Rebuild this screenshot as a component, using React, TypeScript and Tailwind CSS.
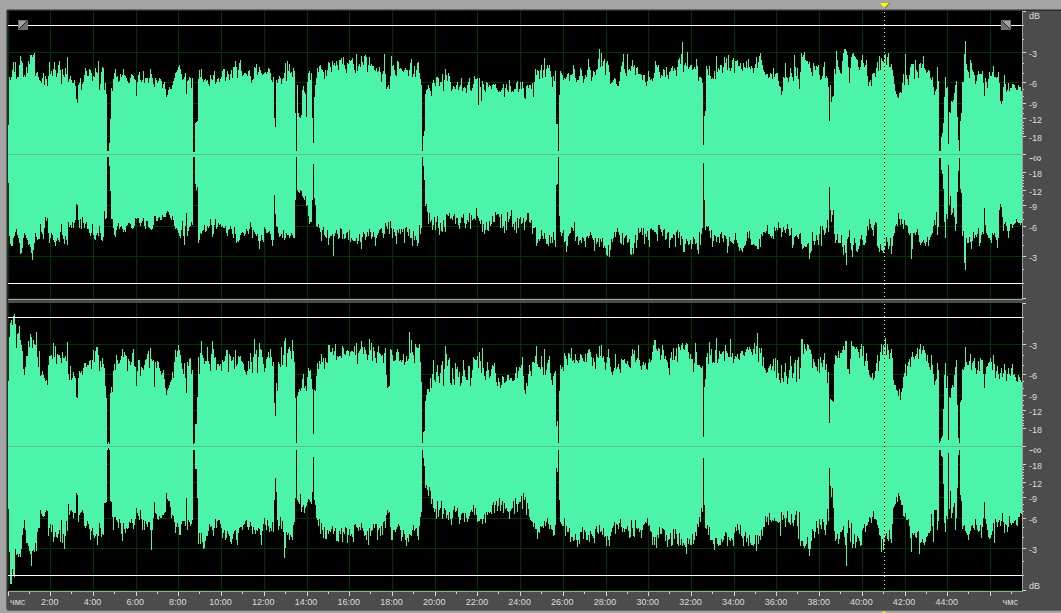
import React from "react";

// Envelopes are flat lists of x, y pairs in chart units.
const leftUpperText =
  "8 125 9 77 11 77 13 62 14 72 15 62 16 79 18 77 20 56 22 63 23 77 25 77 26 67 27 73 28 61 29 64 30 55 32 57 34 53 35 76 37 72 39 80 41 83 43 73 44 85 45 76 47 86 49 62 50 74 51 71 52 76 54 62 56 77 58 65 59 61 61 84 62 69 64 77 65 68 66 74 67 57 68 82 70 76 72 83 74 80 75 86 76 99 77 103 78 85 80 78 81 90 83 82 85 68 87 76 90 70 92 81 94 77 95 68 97 73 98 61 99 90 101 72 103 68 104 90 105 83 106 94 107 151 108 151 109 143 110 119 111 88 112 91 113 79 114 73 115 69 116 77 119 81 120 74 122 75 123 69 125 76 127 81 129 83 131 74 133 76 135 80 136 96 137 82 139 72 140 80 142 80 143 71 144 83 146 78 148 83 150 69 151 74 153 84 154 87 155 78 157 83 160 79 162 88 164 82 166 97 168 90 170 89 172 85 174 78 175 73 177 70 178 67 180 69 182 80 185 73 186 94 187 81 190 78 191 88 192 78 193 152 194 152 195 123 196 122 197 121 198 79 199 70 200 77 201 69 202 79 204 80 207 80 209 86 210 75 212 80 214 71 215 84 217 79 219 82 221 77 222 71 224 69 225 81 227 71 229 80 231 70 232 78 233 67 235 61 237 78 238 70 240 60 242 76 245 73 247 76 249 70 251 83 253 79 254 67 256 64 257 75 259 67 261 73 262 75 264 73 267 72 268 68 270 73 272 82 273 77 274 118 275 127 276 80 277 83 279 76 281 84 283 78 285 63 286 81 287 61 288 71 289 64 290 73 292 77 293 68 294 71 295 113 296 151 297 85 298 113 299 117 301 115 302 90 303 86 304 92 305 94 306 117 307 82 308 73 309 71 310 80 311 73 312 118 313 143 314 97 315 85 316 78 317 68 318 72 319 66 320 65 322 70 324 79 325 70 326 76 328 62 330 67 331 72 332 61 335 66 336 61 338 70 339 60 341 58 342 64 343 57 345 69 346 73 347 63 349 60 350 61 352 58 353 64 355 73 356 54 357 71 359 64 360 67 361 56 363 65 364 56 366 57 367 72 369 57 370 66 372 66 374 70 376 68 378 71 379 67 381 82 383 71 384 54 385 74 386 89 388 85 389 89 390 76 391 56 392 66 394 70 396 76 397 61 399 69 401 69 403 72 405 68 407 70 408 76 409 70 411 59 412 77 414 66 415 77 416 70 418 62 419 73 420 79 421 85 422 151 423 136 424 131 425 94 427 89 428 85 430 91 431 96 432 83 433 80 435 86 436 77 438 78 439 86 441 82 442 74 443 91 444 80 445 69 447 81 448 73 450 82 451 91 453 86 455 89 457 82 458 90 459 87 461 78 462 91 464 87 466 93 468 82 469 78 470 90 472 88 474 76 476 79 477 78 478 105 479 78 480 87 481 101 482 81 483 84 485 92 486 82 488 87 491 89 493 84 495 84 497 90 500 92 503 84 504 97 506 84 508 92 509 80 511 92 513 92 515 89 517 81 518 92 520 82 521 89 522 82 524 98 525 99 526 86 528 88 530 85 531 89 532 83 533 97 534 82 535 69 536 75 538 71 539 79 541 65 542 78 544 58 545 77 547 65 548 68 549 65 551 77 552 87 553 76 554 81 555 71 556 124 557 124 558 151 559 95 560 71 561 73 563 80 564 78 567 74 568 73 569 81 570 75 572 74 573 65 574 69 575 78 577 80 579 76 580 68 582 76 583 83 585 75 586 77 588 59 590 70 591 81 593 71 595 75 597 69 599 49 600 67 601 53 602 66 604 59 605 75 606 63 607 61 609 72 610 84 612 82 614 78 617 86 619 81 621 66 623 54 624 69 626 76 627 54 628 70 630 71 632 60 633 67 634 65 635 75 637 67 638 74 640 74 642 80 644 75 646 86 647 81 648 71 650 80 653 78 654 73 655 61 657 67 658 65 660 78 662 76 663 69 665 77 666 67 668 79 670 71 672 66 673 71 675 70 676 76 677 67 679 58 680 64 681 54 682 42 683 72 685 63 686 66 687 52 688 69 690 65 692 70 693 69 695 69 696 59 697 66 698 81 700 77 702 83 703 145 704 116 705 111 706 66 708 75 709 66 710 76 713 79 714 71 715 79 716 56 717 72 719 70 721 65 722 73 724 57 725 63 726 58 727 70 728 55 729 68 731 68 733 58 734 73 735 61 737 60 739 66 740 63 742 71 743 63 745 68 746 61 747 68 748 59 750 69 751 66 753 73 755 64 756 57 757 68 759 56 760 53 761 60 763 70 765 75 767 74 768 78 770 73 772 79 773 68 774 77 775 74 777 73 779 86 780 87 781 95 782 91 783 77 784 78 785 63 786 77 788 82 789 77 790 68 792 77 793 81 794 55 795 67 796 76 797 68 799 89 800 72 801 53 803 55 804 52 805 60 807 61 809 62 811 72 812 76 813 63 815 70 817 67 818 65 820 80 822 76 824 62 825 78 827 78 828 87 829 121 830 85 831 102 833 96 834 69 835 74 836 51 837 60 839 70 841 74 843 53 845 49 847 55 849 83 851 57 852 54 854 56 857 60 859 70 861 60 862 55 864 67 866 60 867 76 868 86 870 80 871 86 872 74 874 73 875 77 877 62 878 71 879 56 880 70 881 58 883 62 884 54 885 54 886 65 888 53 889 67 891 64 893 76 894 84 896 94 898 98 899 93 901 93 903 74 904 85 905 54 906 75 908 85 909 75 911 64 913 64 914 79 915 60 916 70 918 78 919 64 921 68 923 56 924 68 926 73 928 70 930 78 932 77 933 87 934 95 936 89 937 67 938 81 939 151 940 151 941 137 942 133 943 123 944 97 945 77 946 88 947 87 948 144 949 112 950 113 951 101 953 100 954 93 955 85 956 81 957 117 958 140 959 151 960 121 961 113 962 82 963 82 964 54 965 41 966 64 967 70 969 78 970 60 972 70 974 75 975 84 977 75 978 71 980 74 982 71 984 96 985 78 987 88 989 72 991 76 993 66 994 77 996 78 998 72 999 83 1000 101 1002 101 1003 87 1004 75 1006 92 1008 83 1009 91 1011 88 1013 84 1015 88 1017 90 1018 85 1020 87 1022 90";

const leftLowerStart =
  "8 183 9 236 10 244 12 246 14 236 16 229 17 235 19 243 20 254 22 248 24 233 26 238 28 245 30 247 32 260 33 250 34 243 35 233 37 240 39 239 40 224 41 232 43 239 45 217 46 221 47 218 48 233 49 243 51 233 53 240 55 246 57 238 59 242 61 224 62 235 64 244 65 236 67 245 68 222 69 227 71 228 72 222 73 228 75 220 76 204 77 205 78 220 79 228 80 219 81 229 82 217 84 228 86 222 87 229 89 233 91 233 92 224 93 235 94 239 96 235 98 236 99 226 101 240 103 237 104 211 105 219 106 218 107 157 108 157 109 166 110 191 111 219 112 219 113 228 115 237 117 226 118 223 119 229 121 226 123 232 125 232 127 225 129 223 131 228 133 228 135 218 137 218 139 223 141 223 143 218 145 229 146 221 148 227 150 229 152 229 154 216 156 221 158 218 160 220 162 215 164 217 166 213 167 211 169 215 171 220 172 216 174 226 176 228 178 233 180 238 182 221 184 245 186 213 187 236 189 227 191 222 192 225 193 157 194 157 195 184 196 190 197 187 198 243 199 240 200 233 202 231 204 225 205 232 207 226 209 226 210 219 212 237 214 225 215 219 216 229 218 223 220 224 222 226 224 228 225 226 227 236 229 229 231 229 233 238 234 227 236 243 238 242 240 235 242 232 244 236 246 229 248 234 250 222 252 238 253 230 255 234 257 234 259 249 261 235 263 242 264 227 266 233 268 232";

const leftLowerMiddle =
  "270 234 273 240 274 195 276 226 280 236 284 240 290 236 294 238 295 200 296 157 297 190 298 192 302 196 306 206 309 224 311 222 312 200 313 164 314 198 316 226 320 232 326 238 330 236 332 234 333 256 334 236 345 238 352 240 360 242 368 236 376 238 384 234 388 222 392 238 400 234 408 236 416 240 421 228 422 157 423 166 424 180 425 206 430 222 436 222 442 232 448 216 455 224 462 218 468 222 475 220 476 208 477 216 482 232 490 226 497 214 503 226 510 216 518 228 526 220 534 228 537 243 542 236 548 246 553 232 555 247 556 185 557 184 558 157 559 216 560 232 567 246 572 228 580 240 588 238 596 244 604 246 610 250 616 232 624 238 632 248 640 232 648 240 655 232 662 236 670 240 678 238 684 252 690 240 697 250 702 228 703 163 704 200 705 230 710 238 716 242 722 238 728 246 734 240 742 252 748 238 754 245 758 249 764 232 772 236 779 228";

const leftLowerEnd =
  "780 228 781 237 783 227 785 233 787 224 789 236 791 228 792 248 794 237 796 235 798 239 800 233 802 249 804 246 806 247 808 243 809 259 811 251 812 232 814 245 816 235 818 245 820 226 821 246 822 226 824 235 826 228 827 220 828 232 829 187 830 210 831 222 833 210 834 234 835 243 837 234 838 243 840 243 841 235 843 255 844 245 846 265 847 239 849 230 850 243 852 257 854 238 856 251 858 249 860 239 861 235 863 245 865 243 867 226 868 230 869 219 871 228 873 236 874 225 876 223 877 246 879 252 880 244 882 251 883 253 885 246 886 237 888 249 890 238 891 254 893 236 895 226 897 226 898 213 900 225 901 219 903 229 904 220 906 225 908 233 910 233 911 259 913 233 915 235 917 229 919 242 921 243 923 240 925 246 927 237 928 246 930 237 932 233 934 220 935 225 936 212 937 235 938 227 939 158 940 158 941 170 942 174 943 189 944 222 945 238 946 214 947 219 948 165 949 205 950 196 951 215 953 208 954 217 955 231 956 224 957 192 958 171 959 158 960 189 961 193 962 236 963 231 964 263 965 270 966 238 967 243 969 237 971 249 973 232 974 238 976 237 978 228 979 246 981 235 983 234 984 208 985 225 987 235 989 238 991 243 992 233 994 233 995 237 997 248 998 238 999 210 1000 204 1001 207 1002 217 1003 231 1005 222 1007 231 1008 238 1010 224 1012 228 1014 224 1016 219 1018 223 1020 225 1022 220";

const rightUpperText =
  "8 381 9 337 10 323 11 320 12 325 13 316 14 314 15 324 16 348 17 334 18 333 19 326 20 340 22 351 23 369 24 375 25 367 26 356 27 356 28 341 29 347 30 334 31 337 32 348 33 340 35 345 36 332 37 357 38 367 39 351 40 376 42 371 44 378 45 381 46 380 47 385 48 365 49 356 51 355 52 359 53 343 54 357 55 346 56 364 57 354 59 355 61 363 62 352 63 358 65 356 66 361 67 342 68 374 69 380 70 366 71 380 73 372 75 378 76 397 77 398 78 378 79 371 81 371 82 375 83 368 84 363 86 367 88 365 90 360 91 369 93 350 94 362 95 351 97 347 98 355 99 371 100 361 101 367 102 358 104 368 105 386 106 398 107 444 109 444 110 393 111 387 112 392 113 371 114 364 115 370 116 355 118 364 120 360 122 349 123 357 124 352 126 356 127 371 128 359 130 365 131 362 133 349 134 366 135 367 136 386 137 371 138 360 139 360 140 376 141 367 143 370 145 360 147 354 148 351 149 368 150 348 151 359 153 360 154 387 155 362 156 368 157 361 159 368 161 375 163 370 165 388 166 395 168 388 170 382 172 372 173 378 175 350 176 357 178 345 180 355 182 369 183 374 184 363 186 393 187 362 188 366 190 358 191 374 192 370 193 444 194 443 195 424 196 424 197 397 198 357 199 374 200 353 201 341 202 355 204 364 206 361 207 347 208 361 210 371 212 341 213 349 214 358 215 357 216 370 218 364 220 364 221 371 222 360 224 361 226 350 227 350 228 372 229 354 231 361 233 357 234 369 235 350 236 366 238 356 240 356 242 362 244 370 246 375 248 361 249 369 250 353 252 373 254 339 255 354 256 350 257 373 258 357 259 343 261 350 262 357 264 372 265 368 266 359 268 352 269 358 270 349 272 366 273 362 274 403 275 416 276 383 277 391 278 362 280 367 281 347 282 365 284 341 285 338 286 367 287 353 289 347 291 359 292 340 294 362 295 398 296 443 297 396 298 392 300 391 301 388 303 374 304 388 305 386 306 391 307 377 308 368 310 370 311 379 312 389 313 434 314 390 315 391 316 376 317 363 318 369 319 361 320 364 321 354 322 362 323 358 324 369 325 358 327 363 328 345 329 345 330 352 332 348 333 355 335 344 336 360 338 357 340 356 341 358 342 346 343 348 345 355 347 350 349 356 351 351 353 352 354 346 355 355 356 343 357 364 358 353 360 349 361 341 363 354 364 347 366 354 367 360 368 355 369 339 370 350 371 343 372 361 373 347 375 358 376 363 378 346 379 353 380 354 382 355 383 363 385 348 386 375 387 388 388 387 389 386 390 349 392 355 393 361 395 360 397 349 399 361 401 362 403 354 404 365 406 356 407 361 408 359 409 332 410 353 411 340 412 352 414 363 415 344 417 348 419 344 420 362 421 382 422 443 423 432 424 431 425 401 427 389 429 392 430 378 431 388 433 360 434 380 435 382 437 365 439 383 440 373 442 361 443 386 444 369 445 346 446 354 447 366 449 358 450 383 451 385 452 368 454 385 455 363 456 369 457 367 458 377 459 372 460 386 462 376 463 360 465 377 467 380 468 366 469 366 470 386 472 370 473 357 475 360 477 356 478 368 479 352 480 361 481 373 482 348 483 368 485 380 487 362 489 378 491 369 493 366 494 363 495 373 497 386 498 378 500 388 502 376 504 383 507 375 509 380 512 381 514 380 516 367 517 378 518 371 520 368 522 357 523 376 524 390 525 394 526 383 527 386 529 365 530 371 531 376 532 362 534 363 536 346 537 364 539 367 540 369 541 356 543 375 544 349 545 375 547 363 549 356 550 373 552 385 554 373 555 371 556 426 557 421 558 443 559 391 560 365 562 367 563 371 564 353 565 356 567 365 568 353 570 358 571 348 572 361 574 363 575 354 577 361 578 363 580 354 582 358 584 362 585 354 586 362 588 350 590 352 592 366 593 358 595 369 596 354 598 358 599 346 600 356 601 345 602 358 603 356 605 370 606 363 608 349 610 367 612 375 614 368 615 354 616 369 618 364 620 373 621 359 623 360 625 363 627 361 630 368 632 349 633 354 634 350 635 362 637 358 638 345 639 360 641 370 643 362 645 363 647 370 649 359 651 360 652 352 653 345 655 340 656 349 659 349 660 360 662 345 664 359 665 356 667 362 669 375 670 358 671 352 672 360 673 348 674 360 676 348 677 362 678 344 680 350 682 343 683 349 685 345 687 344 689 359 690 354 692 359 693 372 694 363 695 343 696 352 697 365 700 367 702 366 703 437 704 387 705 379 706 357 707 353 708 364 709 342 710 355 711 349 712 363 714 363 716 338 717 363 719 351 721 354 723 351 724 361 725 345 727 353 729 357 730 339 731 357 732 353 733 363 735 356 737 354 739 360 741 351 743 355 745 352 747 347 748 350 749 347 751 352 752 355 753 349 754 343 755 354 756 346 757 333 758 362 759 348 760 353 761 348 762 366 763 357 764 368 766 373 768 368 770 364 771 370 773 359 774 371 775 358 776 378 777 360 779 380 780 383 781 365 782 378 783 382 785 363 787 384 789 370 790 356 792 378 794 363 795 360 796 382 797 360 798 357 799 379 800 368 801 339 802 339 803 354 804 344 805 349 806 351 807 344 809 349 811 354 812 368 813 359 815 366 817 371 818 359 819 373 820 357 822 367 824 353 825 370 826 364 827 383 828 372 829 423 830 399 832 401 833 402 834 364 835 355 837 358 838 351 839 358 841 353 843 346 844 350 845 341 846 341 847 369 849 374 850 359 851 341 853 346 855 349 857 349 859 358 861 344 862 356 863 346 864 366 866 353 868 370 870 377 871 378 872 373 873 380 875 371 877 355 878 371 879 361 881 344 882 355 883 345 884 347 885 338 886 355 887 344 888 350 889 359 891 349 892 358 893 380 894 385 896 390 898 396 899 389 900 400 902 388 903 377 905 364 906 376 907 366 909 359 910 367 912 352 914 359 916 354 917 348 918 359 920 344 921 354 923 346 924 350 926 361 927 355 928 363 930 370 931 355 932 365 934 385 935 381 936 379 937 363 938 370 939 443 941 438 942 436 943 409 944 375 945 363 946 388 947 376 948 440 949 397 950 398 951 388 953 387 954 375 956 360 957 405 958 438 959 443 960 402 961 400 962 369 964 367 965 347 966 362 968 365 969 361 970 354 971 370 973 361 974 358 976 374 977 370 978 361 979 371 980 358 982 360 983 374 984 388 985 374 987 366 989 362 990 358 992 370 993 355 995 378 997 366 999 379 1001 368 1002 377 1004 364 1006 381 1008 368 1010 376 1012 364 1013 375 1015 377 1017 382 1018 375 1020 380 1022 379";

const rightLowerStart =
  "8 509 9 552 10 584 11 584 12 569 13 576 14 577 15 549 16 555 18 557 20 557 21 549 22 535 23 528 24 520 25 530 26 543 28 546 30 554 31 566 32 551 34 552 35 543 36 551 37 532 39 528 40 510 42 516 43 517 45 512 47 511 48 536 50 524 51 532 52 525 53 542 55 532 57 538 59 530 60 542 61 520 62 543 63 534 64 549 66 521 67 531 68 504 69 515 71 510 73 518 75 513 76 493 77 495 78 522 80 513 82 510 83 513 84 526 86 526 87 521 89 529 90 540 92 528 94 538 96 534 97 545 99 523 101 537 103 535 104 503 106 502 107 450 109 450 110 501 111 502 113 530 114 517 116 520 118 528 119 519 120 523 122 541 123 523 125 533 127 529 129 522 131 519 133 529 135 519 136 508 137 513 139 520 140 510 142 530 143 520 144 530 145 521 147 527 149 522 150 530 151 550 152 530 153 518 154 502 155 513 157 519 159 516 161 518 163 515 165 512 166 493 168 501 170 507 171 518 173 516 175 533 177 523 179 535 180 535 181 524 183 521 185 526 186 498 187 530 188 520 190 526 192 520 193 450 194 450 195 469 196 469 197 498 198 544 199 533 200 544 201 533 203 549 204 548 205 541 207 536 209 524 211 526 213 536 215 519 216 528 218 520 220 524 221 528 222 538 224 530 225 540 227 531 229 536 231 544 233 534 235 530 237 545 238 533 240 527 242 530 244 524 246 520 248 530 250 522 252 534 253 527 255 534 257 531 259 529 261 545 262 531 264 518 266 530 267 520 269 532";

const rightLowerMiddle =
  "270 528 273 532 274 500 275 478 276 492 277 520 283 532 284 558 286 532 292 540 294 522 295 498 296 450 297 500 298 502 306 506 311 504 312 492 313 457 314 500 316 518 322 530 330 532 340 534 350 536 360 530 366 540 374 528 380 536 385 528 387 510 389 512 391 540 400 530 406 546 412 530 418 540 421 512 422 450 423 458 424 466 425 488 427 490 434 512 440 508 448 520 455 512 464 522 472 512 482 524 490 512 498 506 508 512 516 504 524 500 530 520 538 532 546 522 554 535 555 525 556 468 557 472 558 450 559 500 560 522 568 532 576 540 584 530 592 536 600 532 608 540 616 524 624 532 632 528 640 530 648 526 652 545 660 534 668 540 676 534 682 546 690 545 696 536 702 512 703 458 704 505 705 528 712 540 718 546 724 536 732 540 738 530 746 542 754 544 760 540 766 522 774 518 779 522";

const rightLowerEnd =
  "780 536 781 512 782 520 783 515 785 527 787 511 788 522 790 525 791 514 793 526 795 515 796 511 797 526 798 539 799 512 800 546 802 541 804 548 805 546 807 537 809 556 811 541 812 529 814 538 816 521 818 534 819 519 821 529 822 519 824 530 825 535 827 509 828 521 829 468 830 486 831 497 832 488 833 508 834 531 835 541 837 534 838 544 840 532 842 530 843 526 845 545 846 566 847 533 848 520 850 542 851 523 852 548 854 534 855 548 857 536 859 541 861 545 862 530 864 524 865 532 867 525 869 517 871 523 873 511 874 519 876 520 878 528 880 536 881 552 882 539 883 550 885 536 886 533 888 541 889 530 891 543 892 524 893 508 894 506 896 497 897 502 898 493 900 500 902 505 903 516 905 513 906 520 908 519 910 538 911 552 912 533 914 533 916 538 918 531 919 554 920 543 922 539 924 545 926 537 928 533 930 531 931 514 932 526 933 542 934 510 936 510 937 530 938 521 939 450 940 450 941 456 942 457 943 484 944 523 945 532 946 516 947 519 948 453 949 509 950 491 951 518 953 507 954 503 955 530 956 518 957 488 958 455 959 450 960 495 961 501 962 529 964 525 966 533 968 540 970 531 972 525 974 530 975 519 977 530 979 531 980 525 981 538 983 518 984 502 985 519 987 530 988 537 991 535 993 523 994 543 995 519 997 527 999 520 1000 526 1001 521 1002 513 1004 533 1005 524 1007 532 1009 516 1011 525 1013 523 1015 520 1017 526 1018 517 1020 513 1022 516";

type Point = [number, number];

function parse(text: string): Point[] {
  const n = text.split(" ").map(Number);
  const out: Point[] = [];
  for (let i = 0; i + 1 < n.length; i += 2) out.push([n[i], n[i + 1]]);
  return out;
}

function noise(n: number): number {
  const v = Math.sin(n * 127.1) * 43758.5453;
  return v - Math.floor(v);
}

// Fills the columns between sparse lower-envelope points with peaks and dips.
function roughen(points: Point[]): Point[] {
  const out: Point[] = [];
  points.forEach(([x, y], i) => {
    out.push([x, y]);
    const next = points[i + 1];
    if (!next) return;
    for (let c = x + 1; c < next[0]; c++) {
      const t = (c - x) / (next[0] - x);
      const r = noise(c + y);
      const spread = r > 0.86 ? 8 : (r - 0.6) * 15;
      out.push([c, Math.round(y + (next[1] - y) * t + spread)]);
    }
  });
  return out;
}

function columns(points: Point[]): number[] {
  const out: number[] = [];
  let k = 0;
  for (let x = 8; x <= 1021; x++) {
    while (k < points.length - 2 && points[k + 1][0] <= x) k++;
    const [x0, y0] = points[k];
    const [x1, y1] = points[k + 1];
    if (x === x0) out.push(y0);
    else {
      const t = (x - x0) / (x1 - x0);
      out.push(Math.round(y0 + (y1 - y0) * t + (noise(x + y0) - 0.5) * 6));
    }
  }
  return out;
}

function wavePath(upper: Point[], lower: Point[]): string {
  const a = columns(upper);
  const b = columns(lower);
  let d = "M8 " + a[0];
  a.forEach((y, i) => (d += `V${y}H${i + 9}`));
  for (let i = b.length - 1; i >= 0; i--) d += `V${b[i]}H${i + 8}`;
  return d + "Z";
}

const leftWave = wavePath(parse(leftUpperText), [
  ...parse(leftLowerStart),
  ...roughen(parse(leftLowerMiddle)),
  ...parse(leftLowerEnd),
]);
const rightWave = wavePath(parse(rightUpperText), [
  ...parse(rightLowerStart),
  ...roughen(parse(rightLowerMiddle)),
  ...parse(rightLowerEnd),
]);

const gridX = Array.from({ length: 24 }, (_, i) => Math.floor(8 + i * 42.72));
const majors = [0, 41, 71, 92, 107, 125, 143, 161, 179, 194, 215, 245, 287];
const upperMinors = [14, 28, 52, 62, 78, 85, 97, 102, 111, 114, 117, 120, 122];
const minors = [...upperMinors, ...upperMinors.map((m) => 286 - m)];

const scale: { text: string; size: string }[] = [
  { text: "-6", size: "h-[30px]" },
  { text: "-9", size: "h-[21px]" },
  { text: "-12", size: "h-[15px]" },
  { text: "-18", size: "h-[18px]" },
  { text: "-∞", size: "h-[20px] text-[12px]" },
  { text: "-18", size: "h-[16px]" },
  { text: "-12", size: "h-[18px]" },
  { text: "-9", size: "h-[15px]" },
  { text: "-6", size: "h-[21px]" },
  { text: "-3", size: "h-[30px]" },
];
const firstScale = [{ text: "dB", size: "h-[10px]" }, { text: "-3", size: "h-[38px]" }, ...scale];
const secondScale = [{ text: "-3", size: "h-[48px]" }, ...scale, { text: "dB", size: "h-[36px]" }];

const times = Array.from({ length: 22 }, (_, i) => `${(i + 1) * 2}:00`);

function Channel({ wave, top, labels, children }: {
  wave: string;
  top: number;
  labels: { text: string; size: string }[];
  children?: React.ReactNode;
}) {
  return (
    <section className="flex">
      <div className="relative min-w-0 flex-1 border-r border-b border-[#a0a0a0] bg-black">
        <svg
          className="block h-[288px] w-full"
          viewBox={`8 ${top} 1014 288`}
          preserveAspectRatio="none"
          shapeRendering="crispEdges"
          aria-hidden="true"
        >
          {gridX.map((x) => (
            <rect key={x} x={x} y={top} width="1" height="288" fill="#003300" />
          ))}
          {majors.filter((m) => m !== 0).map((m) => (
            <rect key={m} x="8" y={top + m} width="1014" height="1" fill="#003300" />
          ))}
          <path d={wave} fill="#4cf4a9" />
          <rect x="8" y={top + 143} width="1014" height="1" fill="#5fc08f" />
          <rect x="8" y={top + 14} width="1014" height="1" fill="#ffffff" />
          <rect x="8" y={top + 272} width="1014" height="1" fill="#ffffff" />
          <path d={`M884.5 ${top + 3}V${top + 288}`} stroke="#000000" strokeDasharray="1 3" />
          <path d={`M884.5 ${top + 1}V${top + 288}`} stroke="#ffff00" strokeDasharray="1 3" />
        </svg>
        {children}
      </div>
      <div className="flex w-[38px] shrink-0 gap-[3px]">
        <svg className="h-[288px] w-[3px] shrink-0" viewBox="0 0 3 288" shapeRendering="crispEdges" aria-hidden="true">
          {majors.map((m) => (
            <rect key={m} y={m} width="3" height="1" fill="#d8d8d8" />
          ))}
          {minors.map((m) => (
            <rect key={m} y={m} width="1" height="1" fill="#d8d8d8" />
          ))}
        </svg>
        <ul className="text-[9px] leading-[10px]">
          {labels.map((l, i) => (
            <li key={i} className={`flex items-end ${l.size}`}>{l.text}</li>
          ))}
        </ul>
      </div>
    </section>
  );
}

function FadeHandle({ side }: { side: "in" | "out" }) {
  return (
    <button
      type="button"
      aria-label={side === "in" ? "Fade in" : "Fade out"}
      className={`absolute top-[9px] size-[10px] ${side === "in" ? "left-[10px]" : "right-[11px]"}`}
    >
      <svg className="block size-full" viewBox="0 0 10 10" aria-hidden="true">
        <rect width="10" height="10" fill="#6e6e6e" />
        <path d={side === "in" ? "M1 1H9L1 9Z" : "M1 1H9V9Z"} fill="#a3a3a3" />
        <path d={side === "in" ? "M1 9L9 1" : "M1 1L9 9"} stroke="#202020" strokeWidth="1" />
      </svg>
    </button>
  );
}

export default function App() {
  return (
    <main className="min-h-screen overflow-hidden bg-[#a5a5a5] pt-[9px] pl-[6px] font-['Liberation_Sans',sans-serif] text-[#dcdcdc]">
      <div className="rounded-l-[3px] border-t border-b border-l border-[#686868] bg-[#4c4c4c]">
        <div className="flex flex-col gap-[3px] border-t border-l border-[#2c2c2c]">
          <Channel wave={leftWave} top={11} labels={firstScale}>
            <FadeHandle side="in" />
            <FadeHandle side="out" />
            <svg
              className="absolute -top-2 left-[86.5%] h-[6px] w-[10px] -translate-x-1/2"
              viewBox="0 0 10 6"
              aria-hidden="true"
            >
              <path d="M1 0H10L5 5.6Z" fill="#555555" />
              <path d="M0 0H9L4.5 5Z" fill="#ffff00" />
            </svg>
          </Channel>
          <Channel wave={rightWave} top={303} labels={secondScale} />
        </div>
        <footer className="flex">
          <div className="min-w-0 flex-1">
            <svg
              className="block h-[4px] w-full"
              viewBox="7 0 1015 4"
              preserveAspectRatio="none"
              shapeRendering="crispEdges"
              aria-hidden="true"
            >
              {gridX.map((x) => (
                <React.Fragment key={x}>
                  <rect x={x} width="1" height="4" fill="#d8d8d8" />
                  <rect x={x + 21} width="1" height="2" fill="#d8d8d8" />
                </React.Fragment>
              ))}
            </svg>
            <div className="flex h-[14px] text-center text-[9px] leading-[12px]">
              <span className="min-w-0 grow-100 basis-0">чмс</span>
              {times.map((t) => (
                <span key={t} className="min-w-0 grow-200 basis-0">{t}</span>
              ))}
              <span className="flex min-w-0 grow-252 basis-0 justify-end">
                <span className="pr-1">чмс</span>
              </span>
            </div>
          </div>
          <div className="w-[39px] shrink-0" />
        </footer>
      </div>
      <svg className="ml-[873px] block h-[2px] w-[10px]" viewBox="0 0 10 2" aria-hidden="true">
        <path d="M5 0L7 2H3Z" fill="#ffff00" />
      </svg>
    </main>
  );
}
